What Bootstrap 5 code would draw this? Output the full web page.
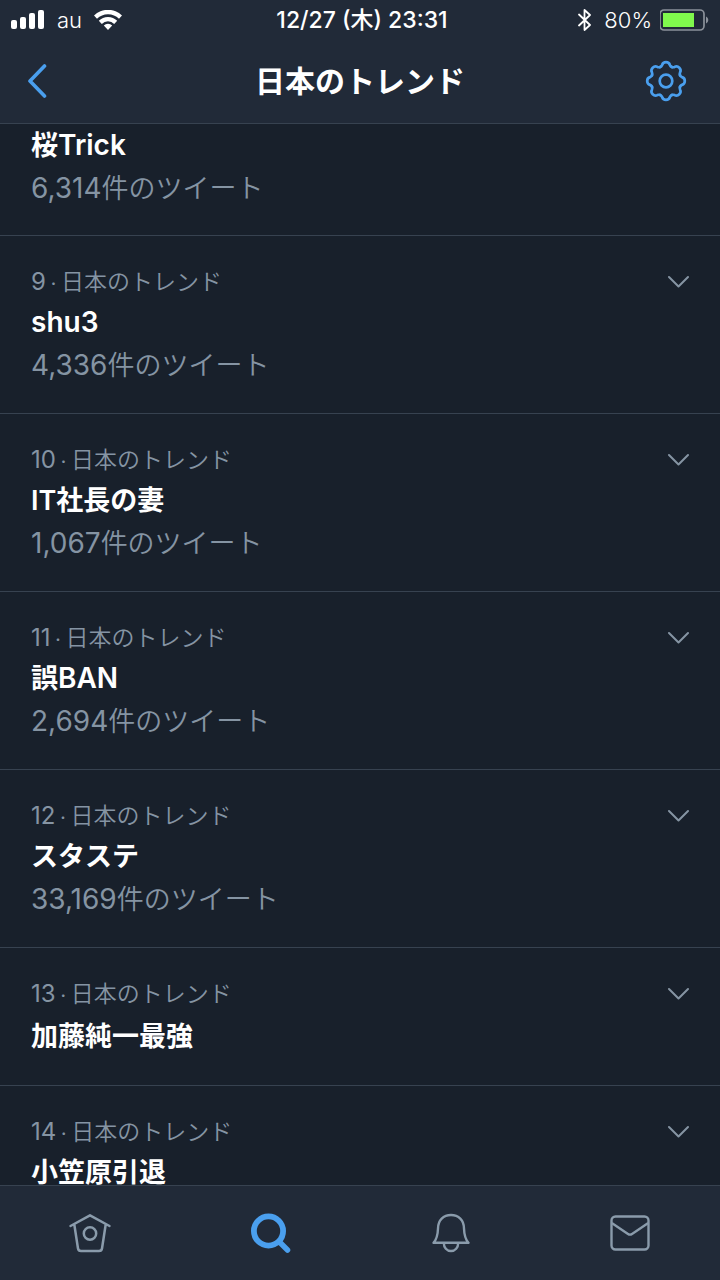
<!DOCTYPE html>
<html lang="ja">
<head>
<meta charset="utf-8">
<meta name="viewport" content="width=device-width, initial-scale=1">
<title>日本のトレンド</title>
<link href="https://cdn.jsdelivr.net/npm/bootstrap@5.3.0/dist/css/bootstrap.min.css" rel="stylesheet">
<style>
  :root { --ink: #18202b; --bar: #212a38; --line: #374250; --dim: #8594a3; --accent: #4a9fee; }
  body { background: var(--ink); color: #fff; font-family: Inter, "Noto Sans CJK JP", sans-serif; }
  svg { display: block; fill: none; stroke: currentColor; stroke-linecap: round; stroke-linejoin: round; }
  .top-bar { background: var(--bar); border-bottom: 1px solid var(--line); }
  .status { height: 40px; padding: 0 11px; font-size: 22px; line-height: 40px; }
  .clock { font-size: 23px; font-weight: 500; }
  .title-row { height: 83px; padding: 0 20px 2px; color: var(--accent); }
  .title-row h1 { font-size: 30px; line-height: 40px; font-weight: 600; color: #fff; }
  .icon-btn { color: inherit; }
  .trend { background: none; color: var(--dim); border: 0; border-bottom: 1px solid var(--line); border-radius: 0; padding: 27px 31px 26px; }
  .trend.cut { padding-top: 0; padding-bottom: 25px; }
  .trend b, .trend i { line-height: 1; }
  .meta { font-size: 23px; line-height: 38px; font-weight: 350; }
  .meta b { font-size: 24px; font-weight: 400; }
  .meta i { font-size: 18px; font-style: normal; font-weight: 500; white-space: pre; }
  .name { font-size: 27px; line-height: 44px; font-weight: 600; color: #fff; }
  .name b { font-size: 28px; font-weight: 600; }
  .lone .name { padding-top: 2px; }
  .count { font-size: 27px; line-height: 42px; font-weight: 350; }
  .count b { font-size: 28px; font-weight: 400; }
  .tabs { background: var(--bar); border-top: 1px solid var(--line); height: 95px; color: #8a9bab; }
  .tabs .active { color: var(--accent); }
</style>
</head>
<body>
<div class="vh-100 d-flex flex-column overflow-hidden">
  <header class="top-bar flex-shrink-0">
    <div class="status d-flex align-items-center">
      <div class="col d-flex align-items-center">
        <svg width="34" height="20" viewBox="0 0 34 20" aria-label="電波"><g fill="#fff" stroke="none"><rect x="0" y="10" width="6" height="9" rx="2"/><rect x="9" y="7" width="6" height="12" rx="2"/><rect x="18" y="3" width="6" height="16" rx="2"/><rect x="27" y="0" width="6" height="19" rx="2"/></g></svg>
        <span class="ms-2 ps-1 me-2 fw-light">au</span>
        <svg class="ms-1" width="28" height="20" viewBox="0 0 28 20" aria-label="Wi-Fi"><path d="M0 5.500a20 20 0 0 1 28 0l-3 3.300a15.600 15.600 0 0 0-22 0zM4.800 10.700a13 13 0 0 1 18.400 0l-3 3.200a8.800 8.800 0 0 0-12.400 0zM14 20l-4.200-4.500a6 6 0 0 1 8.400 0z" fill="#fff" stroke="none"/></svg>
      </div>
      <div class="clock ps-1">12/27 (木) 23:31</div>
      <div class="col d-flex align-items-center justify-content-end">
        <svg width="14" height="24" viewBox="0 0 14 24" stroke-width="1.800" aria-label="Bluetooth"><path d="M1 6.500l11 10.500-5.500 5V2L12 7 1 17.500"/></svg>
        <span class="ms-2 ps-1 me-1 fw-light">80%</span>
        <svg class="ms-1" width="49" height="22" viewBox="1 0 49 22" aria-label="バッテリー"><rect x="1" y="1" width="44" height="20" rx="4" stroke="#8b919a" stroke-width="1.700"/><rect x="4" y="4" width="31" height="14" fill="#80f94d" stroke="none"/><path d="M47 7.500c3 1.500 3 5.500 0 7z" fill="#8b919a" stroke="none"/></svg>
      </div>
    </div>
    <div class="title-row d-flex align-items-center">
      <div class="col"><button class="btn icon-btn border-0 p-0 ps-2" aria-label="戻る"><svg width="20" height="36" viewBox="0 0 20 36" stroke-width="3.600"><path d="M16.500 3L2 18l14.500 15"/></svg></button></div>
      <h1 class="m-0">日本のトレンド</h1>
      <div class="col d-flex justify-content-end">
        <button class="btn icon-btn border-0 p-0 me-2 pe-1" aria-label="設定"><svg width="44" height="44" viewBox="-22 -22 44 44" stroke-width="2.700">
          <defs><path id="tooth" d="M-6-13.900C-4.900-14.400-4.300-14.800-3.900-16C-3.200-18.300-1.800-18.800 0-18.800C1.800-18.800 3.200-18.300 3.900-16C4.300-14.800 4.900-14.400 6-13.900"/></defs>
          <use href="#tooth"/><use href="#tooth" transform="rotate(45)"/><use href="#tooth" transform="rotate(90)"/><use href="#tooth" transform="rotate(135)"/><use href="#tooth" transform="rotate(180)"/><use href="#tooth" transform="rotate(225)"/><use href="#tooth" transform="rotate(270)"/><use href="#tooth" transform="rotate(315)"/>
          <circle r="6.300"/></svg></button>
      </div>
    </div>
  </header>

  <svg class="d-none"><symbol id="down" viewBox="0 0 22 14"><path d="M2 2l9.500 9.500L21 2"/></symbol></svg>

  <main class="flex-fill overflow-hidden">
    <ol class="list-group rounded-0">
      <li class="list-group-item trend cut"><div class="name">桜<b>Trick</b></div><div class="count"><b>6,314</b>件のツイート</div></li>
      <li class="list-group-item trend">
        <div class="meta d-flex align-items-center justify-content-between"><span><b>9</b><i> · </i>日本のトレンド</span><button class="btn icon-btn border-0 p-0" aria-label="メニュー"><svg width="22" height="14" stroke-width="2"><use href="#down"/></svg></button></div>
        <div class="name"><b>shu3</b></div><div class="count"><b>4,336</b>件のツイート</div></li>
      <li class="list-group-item trend">
        <div class="meta d-flex align-items-center justify-content-between"><span><b>10</b><i> · </i>日本のトレンド</span><button class="btn icon-btn border-0 p-0" aria-label="メニュー"><svg width="22" height="14" stroke-width="2"><use href="#down"/></svg></button></div>
        <div class="name">IT社長の妻</div><div class="count"><b>1,067</b>件のツイート</div></li>
      <li class="list-group-item trend">
        <div class="meta d-flex align-items-center justify-content-between"><span><b>11</b><i> · </i>日本のトレンド</span><button class="btn icon-btn border-0 p-0" aria-label="メニュー"><svg width="22" height="14" stroke-width="2"><use href="#down"/></svg></button></div>
        <div class="name">誤<b>BAN</b></div><div class="count"><b>2,694</b>件のツイート</div></li>
      <li class="list-group-item trend">
        <div class="meta d-flex align-items-center justify-content-between"><span><b>12</b><i> · </i>日本のトレンド</span><button class="btn icon-btn border-0 p-0" aria-label="メニュー"><svg width="22" height="14" stroke-width="2"><use href="#down"/></svg></button></div>
        <div class="name">スタステ</div><div class="count"><b>33,169</b>件のツイート</div></li>
      <li class="list-group-item trend lone">
        <div class="meta d-flex align-items-center justify-content-between"><span><b>13</b><i> · </i>日本のトレンド</span><button class="btn icon-btn border-0 p-0" aria-label="メニュー"><svg width="22" height="14" stroke-width="2"><use href="#down"/></svg></button></div>
        <div class="name">加藤純一最強</div></li>
      <li class="list-group-item trend">
        <div class="meta d-flex align-items-center justify-content-between"><span><b>14</b><i> · </i>日本のトレンド</span><button class="btn icon-btn border-0 p-0" aria-label="メニュー"><svg width="22" height="14" stroke-width="2"><use href="#down"/></svg></button></div>
        <div class="name">小笠原引退</div></li>
    </ol>
  </main>

  <nav class="tabs d-flex align-items-center flex-shrink-0">
    <a class="col d-flex justify-content-center text-reset" href="#" aria-label="ホーム"><svg width="44" height="40" viewBox="0 0 44 40" stroke-width="2.500"><path d="M2.500 13L22 2.300 41.500 13M6.300 11.500L10 35.500q.4 2.500 3 2.500h18q2.600 0 3-2.500L37.700 11.500"/><circle cx="22" cy="20.500" r="6.200"/></svg></a>
    <a class="col d-flex justify-content-center active" href="#" aria-label="検索"><svg width="42" height="40" viewBox="0 0 42 40"><circle cx="19.500" cy="18" r="14.600" stroke-width="5.800"/><path d="M31 29.500l7.500 7.500" stroke-width="5.500"/></svg></a>
    <a class="col d-flex justify-content-center text-reset" href="#" aria-label="通知"><svg width="42" height="40" viewBox="-2 0 42 40" stroke-width="2.400"><path d="M2.500 29.800C6 26 6.800 22 7 15.500C7 7 12.500 2 20 2s13 5 13 13.500C33.200 22 34 26 37.500 29.800zM12.800 30c0 4.500 3 8 7.200 8s7.200-3.500 7.200-8"/></svg></a>
    <a class="col d-flex justify-content-center text-reset" href="#" aria-label="メッセージ"><svg width="40" height="40" viewBox="0 0 40 40" stroke-width="2.400"><rect x="1.500" y="3.500" width="37" height="33" rx="4"/><path d="M2.500 10.500L18 21q2 1.300 4 0L37.500 10.500"/></svg></a>
  </nav>
</div>
<script src="https://cdn.jsdelivr.net/npm/bootstrap@5.3.0/dist/js/bootstrap.bundle.min.js"></script>
</body>
</html>
